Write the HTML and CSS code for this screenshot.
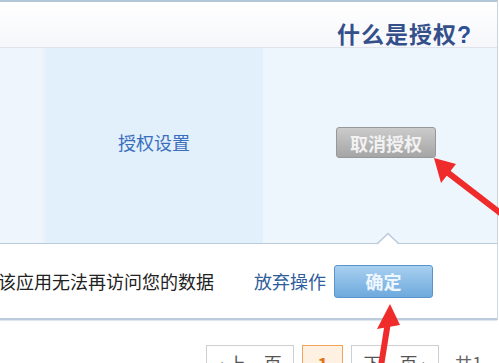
FILE: index.html
```html
<!DOCTYPE html>
<html>
<head>
<meta charset="utf-8">
<link rel="stylesheet" href="styles.css">
</head>
<body>
<div class="page">
  <div class="panel">
    <div class="head"><span class="title">什么是授权<span class="q">?</span></span></div>
    <div class="grid">
      <div class="col col-a"></div>
      <div class="col col-b"><span class="setting">授权设置</span></div>
      <div class="col col-c"><button class="btn btn-grey">取消授权</button></div>
    </div>
    <div class="confirm">
      <svg class="caret" width="24" height="13" viewBox="0 0 24 13"><polygon points="1,12 12,1.5 23,12 23,13 1,13" fill="#ffffff"/><polyline points="1,12 12,1.5 23,12" fill="none" stroke="#b9cadb" stroke-width="1.5"/></svg>
      <span class="msg">该应用无法再访问您的数据</span>
      <a class="cancel">放弃操作</a>
      <button class="btn btn-blue">确定</button>
    </div>
  </div>
  <div class="pager">
    <span class="pg pg-wide">‹ 上一页</span>
    <span class="pg pg-cur">1</span>
    <span class="pg pg-wide">下一页 ›</span>
    <span class="total">共1页</span>
  </div>
  <svg class="arrows" width="499" height="363" viewBox="0 0 499 363">
    <line x1="447" y1="172" x2="512" y2="222" stroke="#f02b2b" stroke-width="6"/>
    <polygon points="434,158 456,164 441,183" fill="#f02b2b"/>
    <line x1="388" y1="322" x2="381" y2="366" stroke="#f02b2b" stroke-width="6"/>
    <polygon points="390,304 377,329 400,325" fill="#f02b2b"/>
  </svg>
</div>
</body>
</html>
```

FILE: styles.css
```css
html, body {
  margin: 0;
  padding: 0;
  background: #ffffff;
}
.page {
  position: relative;
  width: 499px;
  height: 363px;
  overflow: hidden;
  font-family: "Noto Sans CJK SC", "Noto Sans", sans-serif;
}
.panel {
  width: 497px;
  border-top: 2px solid #b3c6d6;
  border-right: 1px solid #c9d6e2;
}
.head {
  box-sizing: border-box;
  height: 46px;
  padding-top: 17px;
  padding-right: 25px;
  border-bottom: 1px solid #dfe4ec;
  background: linear-gradient(#ffffff, #f6f7fb);
  display: flex;
  justify-content: flex-end;
}
.title {
  font-size: 23px;
  line-height: 28px;
  font-weight: 700;
  color: #34508a;
  letter-spacing: 1px;
}
.q {
  font-family: "Liberation Sans", sans-serif;
  font-weight: 700;
  color: #2c4f95;
}
.grid {
  display: grid;
  grid-template-columns: 42px 221px 1fr;
  grid-template-rows: 195px;
  border-bottom: 1px solid #bccbdb;
}
.col {
  padding-top: 79px;
  box-sizing: border-box;
}
.col-a {
  background: #eef5fd;
}
.col-b {
  background: #e2f0fb;
  display: flex;
  justify-content: center;
  align-items: flex-start;
  border-left: 3px solid #ebf2f9;
}
.col-c {
  background: #eef6fd;
  padding-left: 73px;
}
.setting {
  font-size: 18px;
  line-height: 30px;
  color: #3b6fbe;
}
.btn {
  font-family: "Noto Sans CJK SC", "Noto Sans", sans-serif;
  font-size: 18px;
  font-weight: 700;
  line-height: 26px;
  height: 31px;
  width: 100px;
  border-radius: 3px;
  padding: 0;
  color: #f6f6f6;
}
.btn-grey {
  background: linear-gradient(#cbcbcb, #a5a5a5);
  border: 1px solid #989898;
  color: #f2f2f2;
}
.confirm {
  position: relative;
  height: 74px;
  background: #ffffff;
  border-bottom: 2px solid #bcccdc;
  box-shadow: 0 1px 1px #dfe7ef;
  display: flex;
  align-items: center;
}
.caret {
  position: absolute;
  left: 376px;
  top: -12px;
}
.msg {
  font-size: 18px;
  color: #222222;
  margin-left: -2px;
}
.cancel {
  font-size: 18px;
  color: #2e5d9b;
  margin-left: 40px;
  margin-right: 8px;
}
.btn-blue {
  background: linear-gradient(#a8d0f0, #6ea9dd);
  border: 1px solid #5b94cb;
  height: 33px;
  width: 99px;
  color: #eef6ff;
}
.pager {
  display: flex;
  gap: 8px;
  margin-top: 25px;
  padding-left: 206px;
  align-items: flex-start;
}
.pg {
  box-sizing: border-box;
  height: 36px;
  line-height: 34px;
  border: 1px solid #cfcfcf;
  font-size: 18px;
  color: #555555;
  text-align: center;
  background: #ffffff;
}
.pg-wide {
  width: 91px;
}
.pg-cur {
  width: 42px;
  border-color: #f2a35a;
  background: #fff1e2;
  color: #e0741c;
  font-weight: 700;
}
.total {
  font-size: 18px;
  line-height: 36px;
  color: #666666;
  margin-left: 7px;
}
.arrows {
  position: absolute;
  left: 0;
  top: 0;
  pointer-events: none;
}
```
